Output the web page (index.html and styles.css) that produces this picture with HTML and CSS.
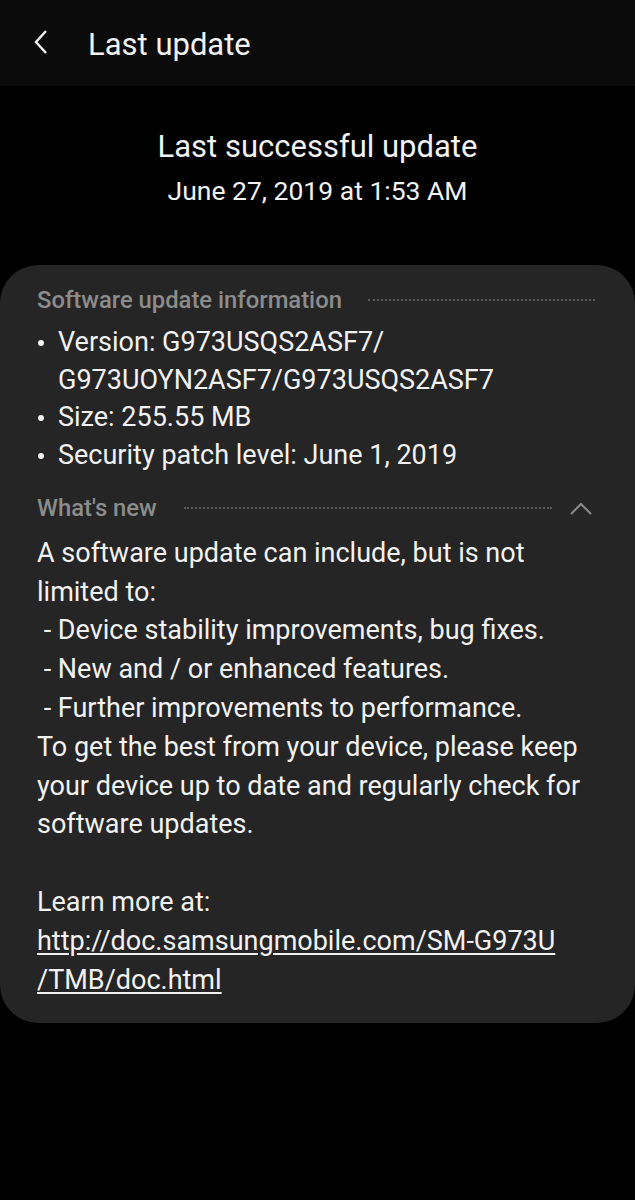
FILE: index.html
```html
<!DOCTYPE html>
<html lang="en">
<head>
    <meta charset="UTF-8">
    <title>Last update</title>
    <link rel="stylesheet" href="styles.css">
</head>
<body>
<div class="topbar">
    <svg class="back" width="20" height="28" viewBox="0 0 20 28">
        <path d="M14 3 L4 14 L14 25" fill="none" stroke="#f2f2f2" stroke-width="2.4"/>
    </svg>
    <span class="topbar-title">Last update</span>
</div>

<div class="summary">
    <div class="summary-title">Last successful update</div>
    <div class="summary-date">June 27, 2019 at 1:53 AM</div>
</div>

<div class="card">
    <div class="sect-head">
        <span class="sect-label">Software update information</span>
        <span class="dots"></span>
    </div>
    <ul class="info">
        <li>Version: G973USQS2ASF7/<br>G973UOYN2ASF7/G973USQS2ASF7</li>
        <li>Size: 255.55 MB</li>
        <li>Security patch level: June 1, 2019</li>
    </ul>

    <div class="sect-head new-head">
        <span class="sect-label">What's new</span>
        <span class="dots"></span>
        <svg class="chev" width="24" height="16" viewBox="0 0 24 16">
            <path d="M2 14 L12 4 L22 14" fill="none" stroke="#8c8c8c" stroke-width="2"/>
        </svg>
    </div>
    <p class="notes">
        A software update can include, but is not<br>
        limited to:<br>
        &nbsp;- Device stability improvements, bug fixes.<br>
        &nbsp;- New and / or enhanced features.<br>
        &nbsp;- Further improvements to performance.<br>
        To get the best from your device, please keep<br>
        your device up to date and regularly check for<br>
        software updates.<br>
        <br>
        Learn more at:<br>
        <a href="#">http://doc.samsungmobile.com/SM-G973U<br>/TMB/doc.html</a>
    </p>
</div>
</body>
</html>
```

FILE: styles.css
```css
* {
    margin: 0;
    padding: 0;
}
body {
    background: #000;
    color: #f2f2f2;
    font-family: Roboto, "Noto Sans", sans-serif;
    width: 635px;
    height: 1200px;
}
.topbar {
    height: 86px;
    background: #0b0b0b;
    display: flex;
    align-items: center;
}
.back {
    margin-left: 32px;
    margin-top: -2px;
}
.topbar-title {
    margin-left: 36px;
    font-size: 31px;
    margin-top: 3px;
}
.summary {
    text-align: center;
    padding-top: 42px;
    height: 137px;
}
.summary-title {
    font-size: 31px;
    line-height: 38px;
}
.summary-date {
    font-size: 26.5px;
    line-height: 34px;
    margin-top: 8px;
}
.card {
    background: #252525;
    border-radius: 38px;
    padding: 20px 40px 24px 37px;
}
.sect-head {
    display: flex;
    align-items: center;
    height: 30px;
}
.sect-label {
    color: #8c8c8c;
    font-size: 23.8px;
    font-weight: 500;
}
.dots {
    flex: 1;
    margin-left: 26px;
    height: 0;
    border-top: 2px dotted #5c5c5c;
}
.info {
    list-style: none;
    font-size: 27px;
    line-height: 37.7px;
    margin-top: 9px;
}
.info li {
    position: relative;
    padding-left: 21px;
}
.info li::before {
    content: "";
    position: absolute;
    left: 1px;
    top: 16px;
    width: 6px;
    height: 6px;
    border-radius: 50%;
    background: #f2f2f2;
}
.new-head {
    margin-top: 18px;
    padding-right: 2px;
}
.new-head .dots {
    margin-left: 27px;
}
.chev {
    margin-left: 17px;
}
.notes {
    font-size: 27px;
    line-height: 38.8px;
    margin-top: 11px;
    white-space: nowrap;
}
.notes a {
    color: #f2f2f2;
    text-decoration: underline;
    text-underline-offset: 3px;
}
```
